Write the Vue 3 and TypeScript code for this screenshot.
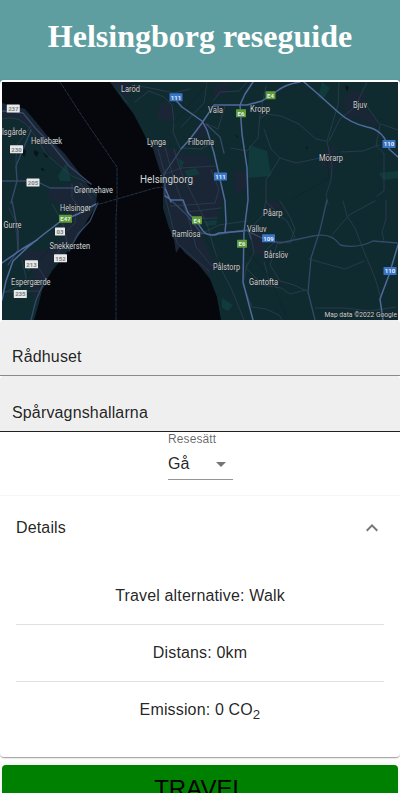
<script setup lang="ts">
import { ref } from 'vue'

interface MapLabel { text: string; x: number; y: number; width: number; size?: number }
interface RoadSign { text: string; x: number; y: number; kind: 'white' | 'blue' | 'green' }

const from = ref('Rådhuset')
const to = ref('Spårvagnshallarna')
const expanded = ref(true)

const labels: MapLabel[] = [
  { text: 'Laröd', x: 121, y: 91.5, width: 19 },
  { text: 'lsgårde', x: 2, y: 135, width: 24 },
  { text: 'Hellebæk', x: 31, y: 143.5, width: 31 },
  { text: 'Grønnehave', x: 74, y: 193, width: 39 },
  { text: 'Helsingør', x: 60, y: 211, width: 31 },
  { text: 'Gurre', x: 3.5, y: 227.5, width: 18 },
  { text: 'Snekkersten', x: 49.5, y: 249, width: 40.5 },
  { text: 'Espergærde', x: 11, y: 284.5, width: 39.5 },
  { text: 'Väla', x: 208, y: 113, width: 15 },
  { text: 'Kropp', x: 250, y: 112, width: 20 },
  { text: 'Lynga', x: 147, y: 145.2, width: 19 },
  { text: 'Filborna', x: 188, y: 145, width: 26 },
  { text: 'Helsingborg', x: 140, y: 183, width: 53, size: 11.2 },
  { text: 'Bjuv', x: 353, y: 107.5, width: 14 },
  { text: 'Mörarp', x: 319, y: 161, width: 24 },
  { text: 'Påarp', x: 263, y: 215.8, width: 19.5 },
  { text: 'Ramlösa', x: 172, y: 237, width: 28.5 },
  { text: 'Välluv', x: 247, y: 232, width: 19.5 },
  { text: 'Bårslöv', x: 264, y: 258, width: 24 },
  { text: 'Pålstorp', x: 213, y: 270, width: 27 },
  { text: 'Gantofta', x: 249, y: 284.8, width: 29 },
  { text: 'Map data ©2022 Google', x: 324.5, y: 317.2, width: 72.5, size: 7.8 },
]

const signs: RoadSign[] = [
  { text: '237', x: 13.3, y: 108.6, kind: 'white' },
  { text: '230', x: 16.5, y: 149.3, kind: 'white' },
  { text: '205', x: 33, y: 182.6, kind: 'white' },
  { text: '03', x: 60, y: 231.6, kind: 'white' },
  { text: '152', x: 60.5, y: 258.3, kind: 'white' },
  { text: '213', x: 31.5, y: 264.3, kind: 'white' },
  { text: '235', x: 20.3, y: 294, kind: 'white' },
  { text: 'E47', x: 65.5, y: 218.7, kind: 'green' },
  { text: '111', x: 176, y: 97.3, kind: 'blue' },
  { text: '111', x: 220.5, y: 176.6, kind: 'blue' },
  { text: 'E4', x: 270.5, y: 95.3, kind: 'green' },
  { text: 'E6', x: 241, y: 113.3, kind: 'green' },
  { text: 'E4', x: 197, y: 220.3, kind: 'green' },
  { text: 'E6', x: 242, y: 243.7, kind: 'green' },
  { text: '109', x: 268.5, y: 238.3, kind: 'blue' },
  { text: '110', x: 389, y: 144, kind: 'blue' },
  { text: '110', x: 390, y: 271, kind: 'blue' },
]

const signWidth = (s: RoadSign): number => (s.text.length === 2 ? 10 : 13)
</script>

<template>
  <div class="page">
    <header class="header"><h1>Helsingborg reseguide</h1></header>
    <main class="card">
      <svg class="map" viewBox="2 82 396 238" preserveAspectRatio="none">
        <rect class="land" x="2" y="82" width="396" height="238" />
        <g class="urban">
          <path d="M2 103L22 107L38 125L65 154L88 176L91 188L72 174L45 149L32 130L19 120L2 116Z" />
          <path d="M49 188L64 186L76 182L94 186L98 192L94 207L80 233L62 252L48 274L38 300L32 296L35 275L22 258L28 249L44 252L65 236L60 222L70 208L49 199Z" />
          <path d="M109 82H133L126 89L132 97L126 99Z" />
          <path d="M153 144L172 149L181 154L206 155L215 169L220 188L223 200L215 222L196 218L204 242L215 264L210 276L176 254L168 220L162 190Z" />
          <path d="M158 108L166 100L174 112L170 122L158 119ZM215 85L229 82L225 95L213 98ZM197 124L209 122L206 136L195 140ZM234 171L248 173L246 190L235 194ZM343 101L352 91L346 88L366 93L363 105L378 121L374 126L358 117L347 121ZM324 153L334 144L335 170L321 166ZM266 200L279 202L281 208L270 210ZM250 231L264 233L266 256L252 253Z" />
        </g>
        <g class="forest">
          <path d="M322 82L330 88L323 100L318 97ZM249 145L267 151L271 176L248 178ZM58 176L66 163L71 181L60 181ZM91 190L103 192L98 199ZM33 258L29 272L25 266ZM379 173L398 171V178L383 180ZM222 298L233 305L228 311L222 308ZM113 84L130 105L124 101Z" />
          <path d="M184 171L196 168L200 174L188 177ZM203 221L217 220L216 225L206 226ZM178 158L184 162L181 170Z" />
        </g>
        <path class="water" d="M2 82H110L126 104L133 113L141 128L148 142L153 149L157 162L162 177L163 190L163 208L168 225L174 240L176 253L180 247L185 253L198 264L210 279L217 297L221 320H34L39 303L43 286L52 271L65 255L80 234L88 219L96 207L97 193L88 185L78 171L64 153L49 138L37 123L25 109L2 103Z" />
        <path class="lake" d="M21 148l5 2-1 7-4-3ZM34 150l5 2-2 5-3-3ZM43 152l6 4-3 2ZM42 167l3 4-4-1ZM345 85l4 2-2 5ZM306 146l2 2-2 1ZM236 135l2 1-1 2Z" />
        <g class="minor">
          <path d="M2 119Q20 114 31 130T46 154L72 176L91 184M31 126L17 145L16 159L17 180L11 203M9 208L15 220L18 249M22 260L27 282L3 293M4 292L40 291L48 281M28 264L38 267L45 278M52 204L62 221L67 242L57 253M77 204L75 223L67 231M72 184L72 198L79 207M80 183L92 199" />
          <path d="M134 85L150 88L174 93L190 89M135 102L149 91L164 97L172 105L174 122L173 132L180 148M207 82L204 103L181 127M213 101L220 92L239 91L247 82M225 106L218 129L207 124M266 86L260 115L258 138L247 151L231 148M182 148L201 149L215 141M264 129L271 149L280 158L296 163L320 158M260 118L267 114L281 116L299 124L316 139L326 141M339 82L338 105L327 141L332 166L331 180L326 195L328 204M360 103L340 119L329 141M364 102L380 125L376 146L384 153L384 191L377 196M367 82L357 103M381 124L398 130M341 152L363 151L379 145M280 158L266 180L266 202L279 214" />
          <path d="M158 149L164 171L165 196L177 243L197 261L209 271M165 147L174 180L189 220L196 247L211 265L221 269L231 288L244 320M174 149L181 172L207 224L220 269M165 174L181 168L215 166M171 206L215 203L219 189L211 170M187 212L221 208M188 219L217 218M201 234L219 225L247 221M250 231L254 253L246 268L263 285L281 288L290 294L306 290M266 201L263 215L251 228M275 213L287 221L295 237L290 243L276 241L264 252M278 242L270 265L280 281L294 285L307 291M280 201L290 217L295 229L290 242M343 201L347 216L355 228L363 249L375 278L381 298M332 235L349 215L375 201M386 200L386 219L382 232L384 241M309 259L323 263L345 269L364 261M315 308L344 308L370 311L396 307M264 262L269 280L278 288M266 309L279 315L282 320M247 263L243 285L252 307L266 309" />
          <path class="dark" d="M174 123L207 84M327 160L329 178L291 200M245 248L268 275L286 315M56 241L32 269L22 290M176 205L199 224L220 265" />
        </g>
        <g class="medium">
          <path d="M2 111L23 113L36 129L52 145L69 166L91 184M2 181L36 181L50 188L73 188L84 192M31 130L16 166L17 181L11 203M12 201L18 231L18 250L8 265M327 200L320 230L311 258L308 292L315 320M280 243L313 236Q332 232 340 245Q357 249 373 241L398 243M98 203L90 221L78 234L69 251M45 280L36 300L31 320" />
          <path d="M165 178L165 195L173 202L188 216L201 233L214 235L238 231L248 230L251 239M206 124L220 137L224 153M247 231L266 240L280 243" />
        </g>
        <g class="major">
          <path d="M96 204L78 214L61 221L44 234L28 247L13 261L6 281L2 300M37 240L22 249L2 263" />
          <path d="M174 98L182 107L202 121L207 130L214 153L225 201L226 222L225 232M181 149L190 139L202 123L214 105L247 105L262 101L277 91Q286 84 300 82M253 82L245 94L240 105L242 134L247 168L248 200L244 232L243 282L253 320M165 188L171 202M165 196L171 200L183 200L188 213L197 222L203 231Q210 238 219 233L231 232L245 231M304 82L318 94L338 112Q350 123 367 127Q384 130 389 149L398 157M398 245L389 275L380 299L383 320" />
        </g>
        <path class="medium" d="M181 149L173 161L164 174L165 188" />
        <path class="ferry" d="M60 82L82 116L117 167V198L116 219L116 320M96 205L117 199L155 188L165 187" />
        <g v-for="s in signs" :key="s.text + s.x" :class="['sign', s.kind]">
          <rect :x="s.x - signWidth(s) / 2" :y="s.y - 4" :width="signWidth(s)" height="8" rx=".5" />
          <text :x="s.x" :y="s.y + 2.4" text-anchor="middle">{{ s.text }}</text>
        </g>
        <text
          v-for="l in labels" :key="l.text" class="place"
          :x="l.x" :y="l.y" :textLength="l.width" :font-size="l.size ?? 8.5"
          lengthAdjust="spacingAndGlyphs"
        >{{ l.text }}</text>
      </svg>

      <input v-model="from" class="field" type="text" aria-label="Från">
      <input v-model="to" class="field active" type="text" aria-label="Till">

      <div class="mode">
        <span class="mode-label">Resesätt</span>
        <div class="select">
          <span>Gå</span>
          <svg viewBox="0 0 24 24"><path d="M7 10l5 5 5-5z" /></svg>
        </div>
      </div>

      <section class="details">
        <button class="summary" type="button" @click="expanded = !expanded">
          <span>Details</span>
          <svg viewBox="0 0 24 24" :class="{ closed: !expanded }"><path d="M16.59 8.59 12 13.17 7.41 8.59 6 10l6 6 6-6z" /></svg>
        </button>
        <ul v-if="expanded" class="facts">
          <li>Travel alternative: Walk</li>
          <li>Distans: 0km</li>
          <li>Emission: 0 CO<sub>2</sub></li>
        </ul>
      </section>
    </main>
    <button class="travel" type="button">TRAVEL</button>
  </div>
</template>

<style>
body {
  margin: 0;
  background: #fff;
}
</style>

<style scoped>
.page {
  height: 100vh;
  overflow: hidden;
  font-family: "Liberation Sans", Arial, sans-serif;
  font-size: 16px;
  color: rgba(0, 0, 0, 0.87);
  background: linear-gradient(#5f9ea0 0 84px, #fff 84px);
}
.header {
  height: 80px;
  display: flex;
  justify-content: center;
  background: #5f9ea0;
}
.header h1 {
  margin: 18px 0 0;
  font: bold 32px/37px "Liberation Serif", "Times New Roman", serif;
  color: #fff;
}
.card {
  height: 677px;
  background: #fff;
  border-radius: 4px;
  box-shadow: 0 2px 1px -1px rgba(0, 0, 0, 0.2), 0 1px 1px rgba(0, 0, 0, 0.14), 0 1px 3px rgba(0, 0, 0, 0.12);
}
.map {
  display: block;
  width: 396px;
  height: 238px;
  padding: 2px 2px 0;
}
.land { fill: #102b30; }
.urban { fill: #1a2635; }
.forest { fill: #113a3c; }
.water { fill: #05070c; }
.lake { fill: #07151a; }
.minor, .medium, .major, .ferry {
  fill: none;
  stroke-linejoin: round;
  stroke-linecap: round;
}
.minor { stroke: #2a3b4e; stroke-width: 0.9; }
.minor .dark { stroke: #142129; }
.medium { stroke: #354968; stroke-width: 1.3; }
.major { stroke: #4f6a9b; stroke-width: 1.5; }
.ferry { stroke: #27364c; stroke-width: 0.9; stroke-dasharray: 3 1.5; }
.place {
  font-family: Roboto, sans-serif;
  fill: #d0d2d3;
  stroke: #111a20;
  stroke-width: 0.7px;
  paint-order: stroke;
}
.sign text {
  font: bold 6px Roboto, sans-serif;
  fill: #e8eef5;
}
.sign.white rect { fill: #e8e9e9; }
.sign.white text { fill: #777c80; }
.sign.blue rect { fill: #3974c5; }
.sign.green rect { fill: #5c9b38; }
.field {
  display: block;
  box-sizing: border-box;
  width: 100%;
  height: 56px;
  padding: 18px 12px 0;
  border: 0;
  border-bottom: 1px solid #898989;
  border-radius: 4px 4px 0 0;
  outline: 0;
  background: #efefef;
  font: 16px/23px "Liberation Sans", Arial, sans-serif;
  letter-spacing: 0.15px;
  color: rgba(0, 0, 0, 0.87);
}
.field.active { border-bottom-color: #212121; }
.mode {
  width: 65px;
  height: 63px;
  margin: 0 auto;
  position: relative;
  left: 0.5px;
}
.mode-label {
  display: block;
  font-size: 12px;
  line-height: 14px;
  letter-spacing: 0.11px;
  color: rgba(0, 0, 0, 0.6);
}
.select {
  display: flex;
  align-items: center;
  justify-content: space-between;
  height: 33px;
  border-bottom: 1px solid #949494;
}
.select span { padding-top: 3px; }
.select svg { width: 24px; height: 24px; margin-top: 2px; fill: rgba(0, 0, 0, 0.54); }
.details { border-top: 1px solid #f6f6f6; }
.summary {
  display: flex;
  align-items: center;
  justify-content: space-between;
  width: 100%;
  height: 64px;
  padding: 0 16px;
  border: 0;
  background: none;
  font: inherit;
  letter-spacing: 0.15px;
  color: inherit;
}
.summary svg {
  width: 24px;
  height: 24px;
  fill: rgba(0, 0, 0, 0.54);
  transform: rotate(180deg);
}
.summary svg.closed { transform: none; }
.facts {
  margin: 0;
  padding: 8px 16px 16px;
  list-style: none;
  text-align: center;
}
.facts li {
  height: 56px;
  line-height: 56px;
  letter-spacing: 0.15px;
  border-bottom: 1px solid #e0e0e0;
}
.facts li:last-child { border-bottom: 0; }
.facts sub { font-size: 13.33px; line-height: 0; }
.travel {
  display: block;
  width: 396px;
  height: 48px;
  margin: 8px 2px 0;
  padding: 0;
  border: 0;
  border-radius: 4px;
  background: #008000;
  font: 24px/44px "Liberation Sans", Arial, sans-serif;
  color: #000;
  box-shadow: 0 0 5px rgba(0, 0, 0, 0.12);
}
</style>
